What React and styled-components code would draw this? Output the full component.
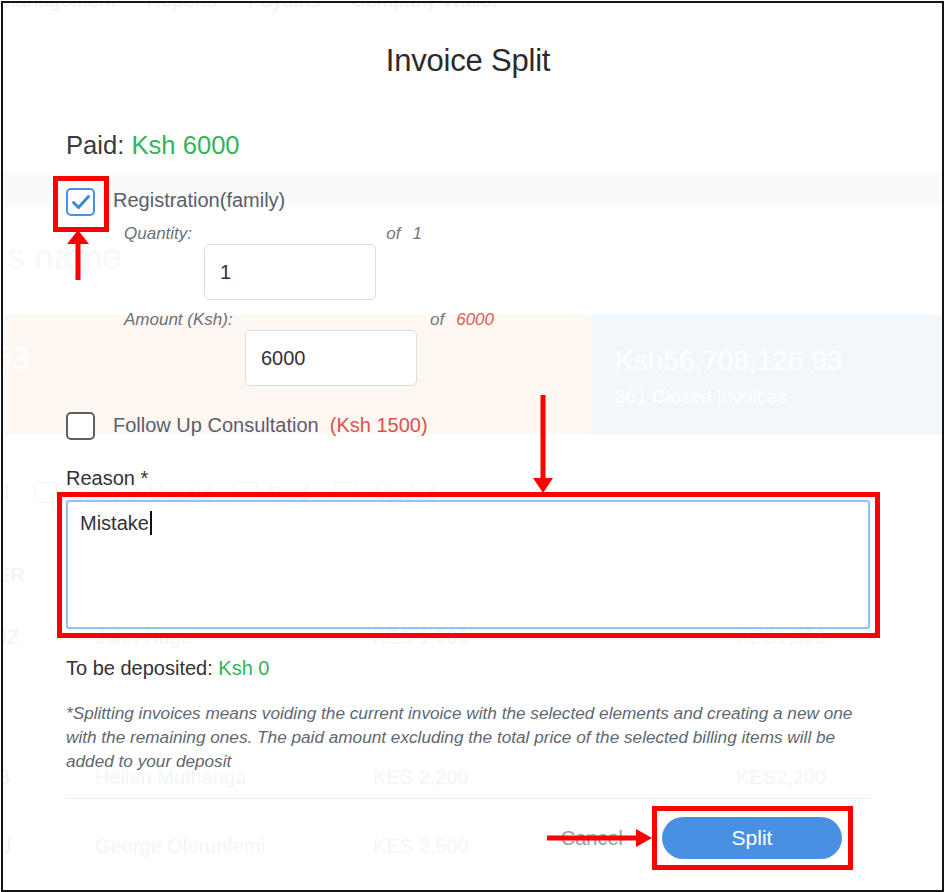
import React from "react";
import styled, { createGlobalStyle } from "styled-components";

const Global = createGlobalStyle`
  html, body { margin: 0; padding: 0; background: #fff; }
  body { font-family: "Liberation Sans", Arial, Helvetica, sans-serif; }
  * { box-sizing: border-box; }
`;

const Frame = styled.div`
  position: relative;
  width: 943px;
  height: 891px;
  margin: 1px 0 0 1px;
  border: 2px solid #151515;
  overflow: hidden;
  background: #fff;
`;

/* ---------- faded page behind the dialog ---------- */
const Ghost = styled.div`
  position: absolute;
  inset: 0;
  z-index: 0;
  display: flex;
  flex-direction: column;
  pointer-events: none;
`;

const GhostNav = styled.div`
  display: flex;
  gap: 31px;
  margin: -14px 0 0 -4px;
  height: 23px;
  font-size: 20px;
  line-height: 23px;
  color: #f0f0f0;
  white-space: nowrap;
`;

const GhostBand = styled.div`
  margin-top: ${(p) => p.$mt || 0}px;
  height: ${(p) => p.$h}px;
  background: ${(p) => p.$bg || "transparent"};
  display: flex;
`;

const GhostName = styled.div`
  padding: 30px 0 0 4px;
  font-size: 35px;
  line-height: 40px;
  color: #f8f8f8;
`;

const StatCell = styled.div`
  width: ${(p) => (p.$w ? `${p.$w}px` : "auto")};
  flex: ${(p) => (p.$w ? "none" : "1")};
  background: ${(p) => p.$bg};
  padding: ${(p) => p.$pad};
  color: #fff;
  display: flex;
  flex-direction: column;
  overflow: hidden;
`;

const StatBig = styled.div`
  margin-left: ${(p) => p.$ml || 0}px;
  font-size: ${(p) => p.$size}px;
  line-height: 32px;
  white-space: nowrap;
`;

const StatSmall = styled.div`
  margin-top: 8px;
  font-size: 19px;
  line-height: 24px;
`;

const GhostTabs = styled.div`
  height: 109px;
  padding-top: 47px;
  display: flex;
  align-items: flex-start;
  margin-left: -3px;
  font-size: 20px;
  line-height: 22px;
  color: #f3f6fa;
  white-space: nowrap;
`;

const GhostTab = styled.span`
  margin-left: ${(p) => p.$ml}px;
`;

const GhostBox = styled.span`
  margin-left: ${(p) => p.$ml}px;
  width: 23px;
  height: 21px;
  border: 1px solid #f4f4f4;
  border-radius: 2px;
`;

const GhostRow = styled.div`
  height: ${(p) => p.$h}px;
  display: grid;
  grid-template-columns: 92px 278px 363px 1fr;
  align-items: center;
  font-size: 20px;
  color: #f4f5f7;
  white-space: nowrap;
`;

const GhostInit = styled.span`
  margin-left: -6px;
  color: #f2f2f2;
`;

const GhostName2 = styled.span`
  color: #f2f5fb;
`;

/* ---------- dialog ---------- */
const Dialog = styled.div`
  position: relative;
  z-index: 1;
  width: 867px;
  padding: 40px 0 0 63px;
  display: flex;
  flex-direction: column;
  color: #333;
`;

const Title = styled.h1`
  margin: 0;
  width: 804px;
  text-align: center;
  font-weight: 400;
  font-size: 31px;
  line-height: 36px;
  letter-spacing: -0.2px;
  color: #2b2b2b;
`;

const Paid = styled.div`
  margin-top: 51px;
  font-size: 25.6px;
  line-height: 30px;
  color: #3a3a3a;
`;

const Green = styled.span`
  color: #33b35a;
`;

const Red = styled.span`
  color: ${(p) => p.$c || "#dc5a52"};
`;

const CheckRow = styled.div`
  margin-top: ${(p) => p.$mt}px;
  display: flex;
  align-items: center;
  gap: 18px;
  height: 28px;
`;

const Box = styled.span`
  flex: none;
  width: 29px;
  height: 28px;
  border-radius: 5px;
  border: 2px solid ${(p) => (p.$on ? "#4a90e2" : "#5f5f5f")};
  background: #fff;
  display: flex;
  align-items: center;
  justify-content: center;
`;

const ItemLabel = styled.span`
  font-size: 20px;
  line-height: 24px;
  color: #59606c;
  transform: translateY(${(p) => p.$dy || 0}px);
  white-space: nowrap;
`;

const FieldHead = styled.div`
  margin: ${(p) => p.$mt}px 0 0 58px;
  width: ${(p) => p.$w}px;
  display: flex;
  justify-content: space-between;
  font-style: italic;
  font-size: 17px;
  line-height: 20px;
  color: #6b717b;
`;

const Of = styled.span`
  display: flex;
  gap: 12px;
  color: #777;
`;

const NumInput = styled.input`
  margin-left: ${(p) => p.$ml}px;
  width: 172px;
  height: 56px;
  border: 1px solid #dadde2;
  border-radius: 5px;
  padding: 0 15px;
  font-family: inherit;
  font-size: 20px;
  color: #333;
  background: #fff;
  outline: none;
`;

const FieldLabel = styled.div`
  margin-top: ${(p) => p.$mt}px;
  font-size: 20px;
  line-height: 22px;
  color: #333;
`;

const TextBox = styled.div`
  margin-top: 11px;
  width: 804px;
  height: 129px;
  border: 2px solid #8ec4f6;
  border-radius: 3px;
  padding: 9px 12px;
  font-size: 20px;
  line-height: 22px;
  color: #333;
  background: #fff;
  box-shadow: 0 0 2px rgba(74, 144, 226, 0.35);
`;

const Caret = styled.span`
  display: inline-block;
  width: 2px;
  height: 24px;
  margin-left: 1px;
  vertical-align: -5px;
  background: #111;
`;

const Note = styled.p`
  margin: 22px 0 0;
  width: 804px;
  font-style: italic;
  font-size: 17.2px;
  line-height: 24px;
  color: #606872;
`;

const Divider = styled.hr`
  margin: 25px 0 0;
  width: 804px;
  border: none;
  border-top: 1px solid #ececec;
`;

const Actions = styled.div`
  margin-top: 18px;
  width: 804px;
  padding-right: 28px;
  display: flex;
  justify-content: flex-end;
  align-items: center;
  gap: 39px;
`;

const Cancel = styled.button`
  border: none;
  background: none;
  padding: 0;
  font-family: inherit;
  font-size: 20px;
  color: #9c9c9c;
`;

const SplitBtn = styled.button`
  width: 180px;
  height: 42px;
  border: none;
  border-radius: 21px;
  background: #4a90e2;
  color: #fff;
  font-family: inherit;
  font-size: 21px;
`;

/* ---------- red annotations over the screenshot ---------- */
const Mark = styled.div`
  position: absolute;
  z-index: 2;
  left: ${(p) => p.$x}px;
  top: ${(p) => p.$y}px;
  width: ${(p) => p.$w}px;
  height: ${(p) => p.$h}px;
  border: 5px solid #ff0000;
`;

const ArrowSvg = styled.svg`
  position: absolute;
  z-index: 2;
  left: ${(p) => p.$x}px;
  top: ${(p) => p.$y}px;
`;

const Check = () => (
  <svg width="22" height="22" viewBox="0 0 22 22">
    <path d="M3.5 11.5 L8.5 16.5 L18.5 5.5" fill="none" stroke="#3b86dc" strokeWidth="3" strokeLinecap="round" strokeLinejoin="round" />
  </svg>
);

export default function App() {
  return (
    <>
      <Global />
      <Frame>
        <Ghost>
          <GhostNav>
            <span>Management</span>
            <span>Reports</span>
            <span>Payouts</span>
            <span>Company Wallet</span>
          </GhostNav>
          <GhostBand $mt={160} $h={35} $bg="#fafafa" />
          <GhostBand $h={108}>
            <GhostName>s name</GhostName>
          </GhostBand>
          <GhostBand $h={120}>
            <StatCell $w={588} $bg="#fff7f2" $pad="27px 0 0 0">
              <StatBig $size={32} $ml={-9}>53</StatBig>
            </StatCell>
            <StatCell $bg="#f2f7fb" $pad="30px 0 0 24px">
              <StatBig $size={28}>Ksh56,708,126.93</StatBig>
              <StatSmall>861 Closed Invoices</StatSmall>
            </StatCell>
          </GhostBand>
          <GhostTabs>
            <GhostTab $ml={0}>ll</GhostTab>
            <GhostBox $ml={25} />
            <GhostTab $ml={12}>Open</GhostTab>
            <GhostTab $ml={8}>✓ Unpaid</GhostTab>
            <GhostBox $ml={22} />
            <GhostTab $ml={12}>Paid</GhostTab>
            <GhostBox $ml={25} />
            <GhostTab $ml={18}>Voided</GhostTab>
          </GhostTabs>
          <GhostRow $h={62}>
            <GhostInit>ER</GhostInit>
          </GhostRow>
          <GhostRow $h={62}>
            <GhostInit>JZ</GhostInit>
            <GhostName2>John Hugo</GhostName2>
            <span>KES 1,500</span>
            <span>KES1,500</span>
          </GhostRow>
          <GhostRow $h={75} />
          <GhostRow $h={68}>
            <GhostInit>B</GhostInit>
            <GhostName2>Hellen Muthanga</GhostName2>
            <span>KES 2,200</span>
            <span>KES2,200</span>
          </GhostRow>
          <GhostRow $h={70}>
            <GhostInit>U</GhostInit>
            <GhostName2>George Olorunfemi</GhostName2>
            <span>KES 2,500</span>
          </GhostRow>
        </Ghost>

        <Dialog>
          <Title>Invoice Split</Title>
          <Paid>
            Paid: <Green>Ksh 6000</Green>
          </Paid>

          <CheckRow $mt={28}>
            <Box $on>
              <Check />
            </Box>
            <ItemLabel $dy={-2}>Registration(family)</ItemLabel>
          </CheckRow>

          <FieldHead $mt={8} $w={298}>
            <span>Quantity:</span>
            <Of>
              <span>of</span>
              <span>1</span>
            </Of>
          </FieldHead>
          <NumInput $ml={138} readOnly value="1" />

          <FieldHead $mt={10} $w={370}>
            <span>Amount (Ksh):</span>
            <Of>
              <span>of</span>
              <Red $c="#e05a55">6000</Red>
            </Of>
          </FieldHead>
          <NumInput $ml={179} readOnly value="6000" />

          <CheckRow $mt={26}>
            <Box />
            <ItemLabel $dy={-1}>
              Follow Up Consultation&nbsp;&nbsp;<Red $c="#d9534f">(Ksh 1500)</Red>
            </ItemLabel>
          </CheckRow>

          <FieldLabel $mt={27}>Reason *</FieldLabel>
          <TextBox>
            Mistake
            <Caret />
          </TextBox>

          <FieldLabel $mt={28}>
            To be deposited: <Green>Ksh 0</Green>
          </FieldLabel>

          <Note>
            *Splitting invoices means voiding the current invoice with the selected elements and creating a new one
            with the remaining ones. The paid amount excluding the total price of the selected billing items will be
            added to your deposit
          </Note>

          <Divider />

          <Actions>
            <Cancel>Cancel</Cancel>
            <SplitBtn>Split</SplitBtn>
          </Actions>
        </Dialog>

        <Mark $x={50} $y={173} $w={56} $h={56} />
        <ArrowSvg $x={63} $y={227} width="24" height="50" viewBox="0 0 24 50">
          <polygon points="12,0 1,14 23,14" fill="#ff0000" />
          <rect x="9.5" y="13" width="5" height="37" fill="#ff0000" />
        </ArrowSvg>

        <ArrowSvg $x={530} $y={392} width="20" height="98" viewBox="0 0 20 98">
          <rect x="7.5" y="0" width="5" height="84" fill="#ff0000" />
          <polygon points="0,83 20,83 10,98" fill="#ff0000" />
        </ArrowSvg>
        <Mark $x={54} $y={489} $w={823} $h={146} />

        <ArrowSvg $x={544} $y={826} width="105" height="18" viewBox="0 0 105 18">
          <rect x="0" y="6.5" width="90" height="5" fill="#ff0000" />
          <polygon points="89,0 105,9 89,18" fill="#ff0000" />
        </ArrowSvg>
        <Mark $x={649} $y={803} $w={201} $h={64} />
      </Frame>
    </>
  );
}
